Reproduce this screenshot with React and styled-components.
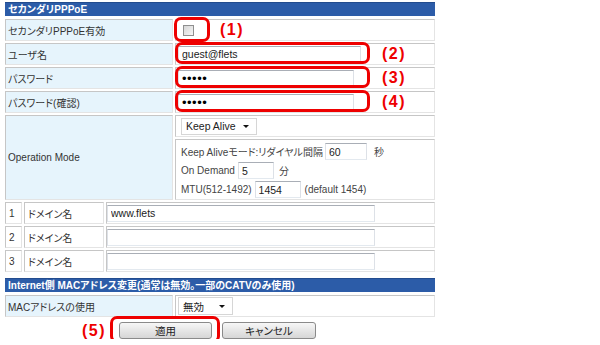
import styled, { createGlobalStyle } from "styled-components";

const GlobalStyle = createGlobalStyle`
  html, body {
    margin: 0;
    background: #fff;
  }
  body {
    font-family: "Liberation Sans", "Noto Sans CJK JP", sans-serif;
    font-size: 10px;
    color: #333;
    font-feature-settings: "palt";
  }
`;

const Page = styled.div`
  width: 430px;
  padding: 2px 0 0 5px;
`;

const SectionHeader = styled.div`
  height: 13px;
  line-height: 13px;
  margin-top: ${({ $gap }) => $gap || 0}px;
  padding-left: 3px;
  background: #2c5ca8;
  border-top: 1px solid #234c8e;
  color: #fff;
  font-weight: bold;
  font-size: 10px;
  white-space: nowrap;
`;

const Rows = styled.div`
  display: flex;
  flex-direction: column;
  gap: 2px;
  margin-top: ${({ $gap }) => $gap ?? 3}px;
`;

const Row = styled.div`
  display: grid;
  grid-template-columns: ${({ $cols }) => $cols || "168px 1fr"};
  gap: 2px;
  height: ${({ $h }) => $h || 22}px;
`;

const Cell = styled.div`
  position: relative;
  display: flex;
  align-items: center;
  min-width: 0;
  box-sizing: border-box;
  height: ${({ $h }) => ($h ? `${$h}px` : "auto")};
  padding: 0 ${({ $pad }) => $pad ?? 2}px;
  border: 1px solid;
  border-color: #c6c6c6 #e4e4e4 #e4e4e4 #c6c6c6;
  background: ${({ $label }) => ($label ? "#e6f4fc" : "#fff")};
  white-space: nowrap;
`;

const Stack = styled.div`
  display: flex;
  flex-direction: column;
  gap: 2px;
`;

const Box = styled(Cell)`
  flex-direction: column;
  align-items: stretch;
  padding: 2px 5px 0;
`;

const Line = styled.div`
  display: flex;
  align-items: center;
  height: 19px;
  color: #444;
`;

const Field = styled.input`
  box-sizing: border-box;
  width: ${({ $w }) => $w}px;
  height: 17px;
  margin: ${({ $m }) => $m || "0"};
  padding: 0 3px;
  border: 1px solid;
  border-color: #a9aeb6 #dde1e7 #e3e9ef #dde1e7;
  background: #fff;
  color: #222;
  font-family: "Liberation Sans", "Noto Sans CJK JP", sans-serif;
  font-size: 10.5px;
  outline: none;
`;

const Secret = styled(Field)`
  font-size: 13px;
  letter-spacing: 0.5px;
  color: #000;
`;

const Check = styled.span`
  display: inline-block;
  width: 11px;
  height: 11px;
  margin-left: 5px;
  box-sizing: border-box;
  border: 1px solid #8f8f8f;
  background: linear-gradient(135deg, #d6d6d6, #f6f6f6);
`;

const Select = styled.div`
  position: relative;
  box-sizing: border-box;
  width: ${({ $w }) => $w}px;
  height: ${({ $h }) => $h || 17}px;
  padding-left: 4px;
  display: flex;
  align-items: center;
  border: 1px solid #d6d6d6;
  background: #fff;
  color: #222;
  font-size: 10.5px;

  &::after {
    content: "";
    position: absolute;
    right: 7px;
    top: 50%;
    margin-top: -1px;
    border-left: 3px solid transparent;
    border-right: 3px solid transparent;
    border-top: 3px solid #111;
  }
`;

const Unit = styled.span`
  margin-left: ${({ $ml }) => $ml || 4}px;
`;

const Mark = styled.span`
  position: absolute;
  left: ${({ $x }) => $x}px;
  top: ${({ $y }) => $y}px;
  width: ${({ $w }) => $w}px;
  height: ${({ $h }) => $h}px;
  box-sizing: border-box;
  border: 3px solid #ee0000;
  border-radius: 7px;
  pointer-events: none;
`;

const Num = styled.span`
  position: absolute;
  left: ${({ $x }) => $x}px;
  top: 50%;
  transform: translateY(-50%);
  color: #ee0000;
  font-family: "Liberation Sans", sans-serif;
  font-weight: bold;
  font-size: 16px;
  letter-spacing: 1.5px;
  white-space: nowrap;
`;

const Buttons = styled.div`
  display: flex;
  gap: 10px;
  margin-top: 5px;
  padding-left: 114px;
`;

const Hot = styled.div`
  position: relative;
`;

const Button = styled.button`
  width: ${({ $w }) => $w || 93}px;
  height: 17px;
  padding: 0;
  border: 1px solid #8a8a8a;
  border-radius: 3px;
  background: linear-gradient(#f7f7f7, #e6e6e6 50%, #d6d6d6);
  color: #222;
  font-family: "Liberation Sans", "Noto Sans CJK JP", sans-serif;
  font-size: 10.5px;
  font-feature-settings: "palt";
`;

const domains = ["www.flets", "", ""];

export default function App() {
  return (
    <Page>
      <GlobalStyle />
      <SectionHeader>セカンダリPPPoE</SectionHeader>
      <Rows>
        <Row>
          <Cell $label>セカンダリPPPoE有効</Cell>
          <Cell>
            <Check />
            <Mark $x={-2} $y={-3} $w={36} $h={25} />
            <Num $x={44}>(1)</Num>
          </Cell>
        </Row>
        <Row>
          <Cell $label>ユーザ名</Cell>
          <Cell>
            <Field $w={183} defaultValue="guest@flets" />
            <Mark $x={-1} $y={-2} $w={195} $h={22} />
            <Num $x={206}>(2)</Num>
          </Cell>
        </Row>
        <Row>
          <Cell $label>パスワード</Cell>
          <Cell>
            <Secret type="password" $w={176} defaultValue="12345" />
            <Mark $x={-1} $y={-2} $w={195} $h={22} />
            <Num $x={206}>(3)</Num>
          </Cell>
        </Row>
        <Row>
          <Cell $label>パスワード(確認)</Cell>
          <Cell>
            <Secret type="password" $w={176} defaultValue="12345" />
            <Mark $x={-1} $y={-2} $w={195} $h={22} />
            <Num $x={206}>(4)</Num>
          </Cell>
        </Row>
        <Row $h={85}>
          <Cell $label>Operation Mode</Cell>
          <Stack>
            <Cell $pad={5} $h={22}>
              <Select $w={76}>Keep Alive</Select>
            </Cell>
            <Box $h={61}>
              <Line>
                Keep Aliveモード:リダイヤル間隔
                <Field $w={42} $m="0 0 0 2px" defaultValue="60" />
                <Unit $ml={7}>秒</Unit>
              </Line>
              <Line>
                On Demand
                <Field $w={36} $m="0 0 0 3px" defaultValue="5" />
                <Unit $ml={5}>分</Unit>
              </Line>
              <Line>
                MTU(512-1492)
                <Field $w={46} $m="0 0 0 3px" defaultValue="1454" />
                <Unit $ml={4}>(default 1454)</Unit>
              </Line>
            </Box>
          </Stack>
        </Row>
        {domains.map((d, i) => (
          <Row key={i} $cols="17px 80px 1fr">
            <Cell $pad={3}>{i + 1}</Cell>
            <Cell $pad={3}>ドメイン名</Cell>
            <Cell $pad={0}>
              <Field $w={268} defaultValue={d} />
            </Cell>
          </Row>
        ))}
      </Rows>

      <SectionHeader $gap={6}>
        Internet側 MACアドレス変更(通常は無効。一部のCATVのみ使用)
      </SectionHeader>
      <Rows>
        <Row>
          <Cell $label>MACアドレスの使用</Cell>
          <Cell>
            <Select $w={55} $h={18}>無効</Select>
          </Cell>
        </Row>
      </Rows>

      <Buttons>
        <Hot>
          <Button>適用</Button>
          <Mark $x={-9} $y={-6} $w={110} $h={27} />
          <Num $x={-37}>(5)</Num>
        </Hot>
        <Button $w={94}>キャンセル</Button>
      </Buttons>
    </Page>
  );
}
